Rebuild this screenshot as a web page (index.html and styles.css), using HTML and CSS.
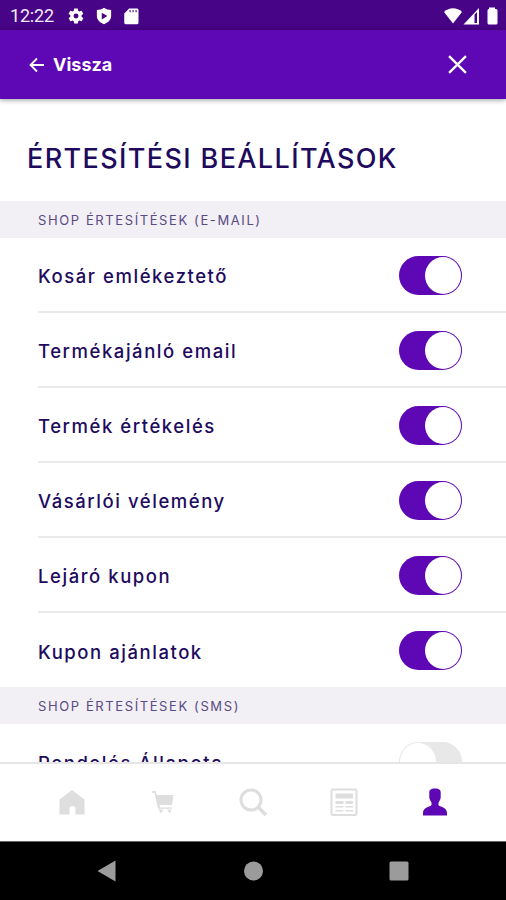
FILE: index.html
```html
<!DOCTYPE html>
<html lang="hu">
<head>
    <meta charset="UTF-8">
    <meta name="viewport" content="width=device-width, initial-scale=1.0">
    <title>Értesítési beállítások</title>
    <link rel="stylesheet" href="styles.css">
</head>
<body>
    <div class="phone">
        <div class="status-bar">
            <span class="clock">12:22</span>
            <svg class="status-icon" viewBox="0 0 24 24"><path fill-rule="evenodd" d="M19.4 13a7.500 7.500 0 0 0 0-2l2.100-1.600a.5.5 0 0 0 .1-.6l-2-3.500a.5.5 0 0 0-.6-.2l-2.500 1a7 7 0 0 0-1.700-1L14.400 2.400a.5.5 0 0 0-.5-.4h-4a.5.5 0 0 0-.5.4L9 5.100a7 7 0 0 0-1.700 1l-2.500-1a.5.5 0 0 0-.6.2l-2 3.500a.5.5 0 0 0 .1.6L4.500 11a7.500 7.500 0 0 0 0 2l-2.100 1.600a.5.5 0 0 0-.1.6l2 3.500c.1.2.4.3.6.2l2.500-1a7 7 0 0 0 1.700 1l.4 2.700c0 .2.2.4.5.4h4c.3 0 .5-.2.5-.4l.4-2.700a7 7 0 0 0 1.700-1l2.500 1c.2.1.5 0 .6-.2l2-3.500a.5.5 0 0 0-.1-.6zM12 15.300a3.300 3.300 0 1 1 0-6.600 3.300 3.300 0 0 1 0 6.600z"/></svg>
            <svg class="status-icon" viewBox="0 0 24 24"><path fill-rule="evenodd" d="M12 1C9 3 6 4 2.500 4v8c0 5 4 9 9.500 11 5.500-2 9.500-6 9.500-11V4C18 4 15 3 12 1zM9 7.500l7.500 4.500L9 16.500z"/></svg>
            <svg class="status-icon" viewBox="0 0 24 24"><path fill-rule="evenodd" d="M20 2H9.500L3 8.500V21c0 1 .8 2 2 2h15c1.200 0 2-1 2-2V4c0-1.200-.8-2-2-2zM10 4h1.500v3H10zm4 0h1.500v3H14zm4 0h1.500v3H18z"/></svg>
            <svg class="signals" viewBox="0 0 56 18">
                <path d="M1 5C6 0 14 0 19 5L10 16.500z"/>
                <path fill-rule="evenodd" d="M36 1v16.500H20.500zM31.500 7.500V16H34V5z"/>
                <path d="M46 2V.5h6V2h1q1.500 0 1.500 1.500V16q0 1.500-1.500 1.500h-7Q44.500 17.500 44.500 16V3.500Q44.500 2 46 2z"/>
            </svg>
        </div>

        <header class="header">
            <a class="back" href="#">
                <svg class="arrow" viewBox="0 0 16 16"><path d="M15 8H2M8 1.500L1.500 8 8 14.500"/></svg>
                <span>Vissza</span>
            </a>
            <svg class="close" viewBox="0 0 18 18"><path d="M1 1l16 16M17 1L1 17"/></svg>
        </header>

        <main class="content">
            <h1>ÉRTESÍTÉSI BEÁLLÍTÁSOK</h1>

            <h2>SHOP ÉRTESÍTÉSEK (E-MAIL)</h2>
            <ul class="settings">
                <li><span>Kosár emlékeztető</span><i class="toggle on"></i></li>
                <li><span>Termékajánló email</span><i class="toggle on"></i></li>
                <li><span>Termék értékelés</span><i class="toggle on"></i></li>
                <li><span>Vásárlói vélemény</span><i class="toggle on"></i></li>
                <li><span>Lejáró kupon</span><i class="toggle on"></i></li>
                <li><span>Kupon ajánlatok</span><i class="toggle on"></i></li>
            </ul>

            <h2>SHOP ÉRTESÍTÉSEK (SMS)</h2>
            <ul class="settings">
                <li><span>Rendelés Állapota</span><i class="toggle"></i></li>
            </ul>
        </main>

        <nav class="tabs">
            <svg viewBox="0 0 28 28"><path d="M14 2l12.500 9.500v15H17.500v-5.500a3 3 0 0 0-6 0v5.500H1.500v-15z"/></svg>
            <svg viewBox="0 0 28 28"><path d="M3 3h3.500l1.500 4h16.500l-1.500 10H10.500l.5 2.500h12v1.300H9L5.500 5H3zM9.500 21.500h5l-2.500 4zM18 21.500h4.500l-1.500 4z"/></svg>
            <svg class="line" viewBox="0 0 28 28"><circle cx="12" cy="12" r="10"/><path class="handle" d="M19.500 19.500l7.500 7.500"/></svg>
            <svg viewBox="0 0 28 28"><path fill-rule="evenodd" d="M3 .5h22Q27.500.5 27.500 3v22.500q0 2.500-2.500 2.500H3Q.5 28 .5 25.500V3Q.5.500 3 .5zM2.500 2.500V26h23V2.500z"/><path d="M5.500 5.500h17.500v5H5.500zM5.500 13h8v3h-8zM15.500 13H23v3h-7.500zM5.500 18h8v1.500h-8zM15.500 18H23v1.500h-7.500zM5.500 22h8v1.500h-8zM15.500 22H23v1.500h-7.500z"/></svg>
            <svg class="active" viewBox="0 0 28 28"><path d="M14 .5c4.500 0 6 1.500 5.700 5v3.500c0 2.500-1.200 3.500-2.200 5.500v2.500c1 2 8.500 2 8.500 8v2.500H2V25c0-6 7.500-6 8.500-8v-2.500C9.500 12.500 8.300 11.500 8.300 9V5.500C8 2 9.500.5 14 .5z"/></svg>
        </nav>

        <div class="android-nav">
            <svg viewBox="0 0 22 22"><path d="M1.500 11L19.500.5v21z"/></svg>
            <svg viewBox="0 0 22 22"><circle cx="11.500" cy="11" r="9.500"/></svg>
            <svg viewBox="0 0 22 22"><rect x="1.500" y="1.500" width="19" height="19" rx="1.500"/></svg>
        </div>
    </div>
</body>
</html>
```

FILE: styles.css
```css
body {
    margin: 0;
    font-family: Inter, "Open Sans", sans-serif;
    color: #1e0b5e;
    background-color: #fff;
}
.phone {
    width: 506px;
    height: 900px;
    display: flex;
    flex-direction: column;
    overflow: hidden;
}
.status-bar {
    height: 30px;
    box-sizing: border-box;
    padding: 1px 7px 0 10px;
    display: flex;
    align-items: center;
    flex-shrink: 0;
    background-color: #480487;
    color: #f3eafa;
}
.clock {
    width: 57px;
    font-family: Roboto, sans-serif;
    font-size: 18px;
    line-height: 30px;
    letter-spacing: -0.2px;
}
.status-icon {
    width: 18px;
    height: 18px;
    margin-right: 9.500px;
    fill: #fff;
}
.signals {
    width: 56px;
    height: 18px;
    margin-left: auto;
    fill: #fff;
}
.header {
    height: 69px;
    box-sizing: border-box;
    padding: 0 39px 0 29px;
    display: flex;
    align-items: center;
    justify-content: space-between;
    flex-shrink: 0;
    z-index: 1;
    background-color: #5d07b5;
    box-shadow: 0 1px 5px rgba(0, 0, 0, 0.4);
}
.back {
    display: flex;
    align-items: center;
    gap: 8px;
    color: #fff;
    font-size: 18px;
    font-weight: 700;
    text-decoration: none;
}
.arrow {
    width: 16px;
    height: 16px;
    fill: none;
    stroke: #fff;
    stroke-width: 1.8;
}
.close {
    width: 19px;
    height: 19px;
    fill: none;
    stroke: #fff;
    stroke-width: 2.2;
}
.content {
    flex: 1;
    min-height: 0;
    overflow: hidden;
}
h1 {
    margin: 0;
    padding: 43px 0 25px 27px;
    font-size: 27px;
    font-weight: 500;
    line-height: 34px;
    letter-spacing: 1.38px;
    white-space: nowrap;
}
h2 {
    margin: 0;
    padding-left: 38px;
    height: 37px;
    font-size: 13px;
    font-weight: 400;
    line-height: 38px;
    letter-spacing: 1.6px;
    color: #594b84;
    background-color: #f2eff5;
}
.settings {
    margin: 0;
    padding: 0 0 0 38px;
    list-style: none;
}
.settings li {
    height: 75px;
    box-sizing: border-box;
    padding-right: 44px;
    display: flex;
    align-items: center;
    justify-content: space-between;
    border-bottom: 2px solid #eaeaec;
    font-size: 18.5px;
    font-weight: 500;
    letter-spacing: 1.55px;
}
.settings li:last-child {
    height: 74px;
    border-bottom: none;
}
.settings span {
    padding-top: 3px;
}
.toggle {
    width: 63px;
    height: 39px;
    box-sizing: border-box;
    padding: 1px;
    margin-top: 1px;
    display: flex;
    border-radius: 20px;
    background-color: #e8e8e8;
}
.toggle::before {
    content: "";
    width: 36px;
    height: 37px;
    border-radius: 50%;
    background-color: #fff;
}
.toggle.on {
    justify-content: flex-end;
    background-color: #5d07b5;
}
.tabs {
    height: 79px;
    box-sizing: border-box;
    padding: 0 26px 2px 27px;
    display: flex;
    align-items: center;
    justify-content: space-around;
    flex-shrink: 0;
    border-top: 2px solid #e6e6e6;
    background-color: #fff;
}
.tabs svg {
    width: 28px;
    height: 28px;
    fill: #dedede;
}
.tabs .line {
    fill: none;
    stroke: #dedede;
    stroke-width: 3;
}
.tabs .handle {
    stroke-width: 3.6;
}
.tabs .active {
    fill: #5d07b5;
}
.android-nav {
    height: 59px;
    box-sizing: border-box;
    padding: 0 34px;
    display: flex;
    align-items: center;
    justify-content: space-around;
    flex-shrink: 0;
    border-top: 1px solid #666;
    background-color: #000;
}
.android-nav svg {
    width: 22px;
    height: 22px;
    fill: #9b9b9b;
}
```
